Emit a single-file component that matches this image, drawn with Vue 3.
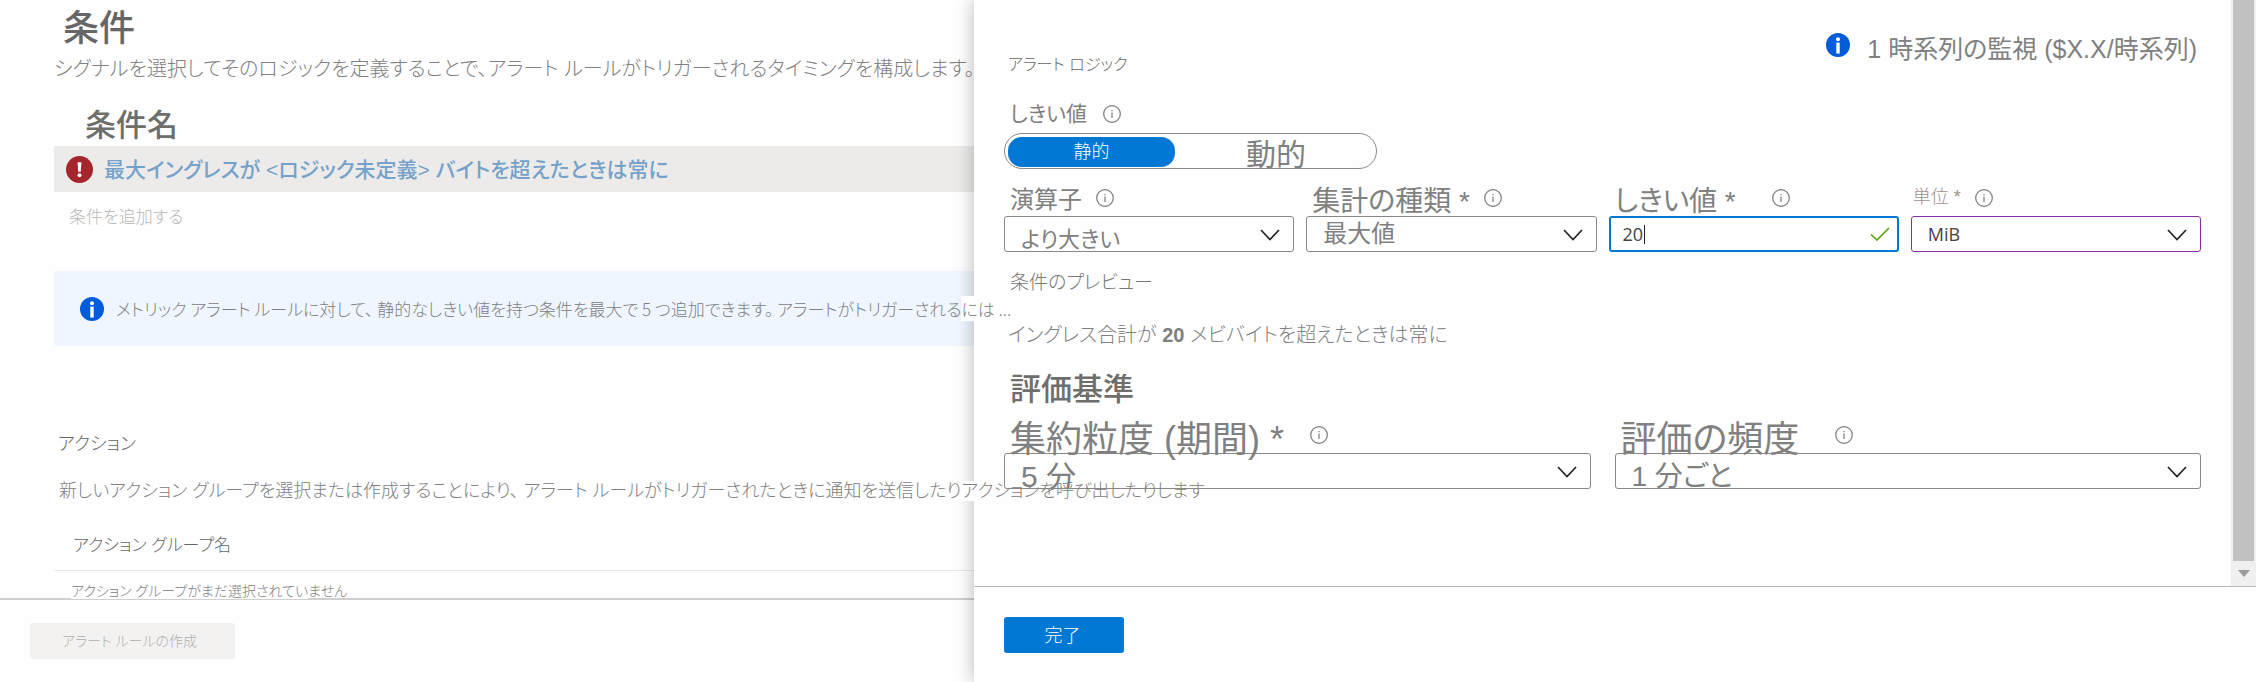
<script setup>
import { ref } from 'vue'

const threshold = ref('20')
const mode = ref('static')

const conditionFields = [
  { id: 'operator', label: '演算子', labelClass: 'size-24 gap-s', value: 'より大きい', valueClass: 'size-22 low' },
  { id: 'aggregation', label: '集計の種類', required: true, labelClass: 'size-28 gap-s', value: '最大値', valueClass: 'size-24' },
  { id: 'threshold', label: 'しきい値', required: true, labelClass: 'size-28 gap-l', input: true },
  { id: 'unit', label: '単位', required: true, labelClass: 'size-18 gap-s thin', value: 'MiB', valueClass: 'latin', changed: true },
]

const evaluationFields = [
  { id: 'period', label: '集約粒度 (期間)', required: true, labelClass: 'size-36 gap-m', value: '5 分', valueClass: 'size-30 low' },
  { id: 'frequency', label: '評価の頻度', labelClass: 'size-36 gap-l', value: '1 分ごと', valueClass: 'size-28 low' },
]
</script>

<template>
  <div class="page">
    <main class="rule">
      <div class="rule-body">
        <h1>条件</h1>
        <p class="lead">シグナルを選択してそのロジックを定義することで、アラート ルールがトリガーされるタイミングを構成します。</p>

        <h2>条件名</h2>
        <div class="condition">
          <svg class="error-icon" viewBox="0 0 27 27" aria-hidden="true">
            <circle cx="13.5" cy="13.5" r="13.5" fill="#a4262c" />
            <path d="M11.6 6.2h3.8l-.6 9.6h-2.6z" fill="#fff" />
            <circle cx="13.5" cy="19.3" r="2" fill="#fff" />
          </svg>
          <a href="#">最大イングレスが &lt;ロジック未定義&gt; バイトを超えたときは常に</a>
        </div>
        <button class="add" type="button" disabled>条件を追加する</button>

        <div class="banner">
          <svg class="info-filled" viewBox="0 0 24 24" aria-hidden="true">
            <circle cx="12" cy="12" r="12" fill="#015cda" />
            <circle cx="12" cy="6.2" r="2" fill="#fff" />
            <rect x="10.3" y="9.6" width="3.4" height="11" fill="#fff" />
          </svg>
          <p class="over">メトリック アラート ルールに対して、 静的なしきい値を持つ条件を最大で 5 つ追加できます。 アラートがトリガーされる<span class="mask">には ...</span></p>
        </div>

        <h3 class="actions-title">アクション</h3>
        <p class="over actions-text">新しいアクション グループを選択または作成することにより、 アラート ルールがトリガーされたときに通知を送信した<span class="mask">りア</span>クションを呼び出したりします</p>

        <table>
          <thead>
            <tr><th scope="col">アクション グループ名</th></tr>
          </thead>
          <tbody>
            <tr><td><span class="over"><span class="mask">アクション グループがまだ選択されてい</span>ません</span></td></tr>
          </tbody>
        </table>
      </div>
      <footer class="rule-footer">
        <button class="create" type="button" disabled>アラート ルールの作成</button>
      </footer>
    </main>

    <aside class="panel">
      <div class="panel-body">
        <form class="logic" @submit.prevent>
          <header class="panel-head">
            <h3>アラート ロジック</h3>
            <p class="notice">
              <svg class="info-filled" viewBox="0 0 24 24" aria-hidden="true">
                <circle cx="12" cy="12" r="12" fill="#015cda" />
                <circle cx="12" cy="6.2" r="2" fill="#fff" />
                <rect x="10.3" y="9.6" width="3.4" height="11" fill="#fff" />
              </svg>
              <span>1 時系列の監視 ($X.X/時系列)</span>
            </p>
          </header>

          <div class="mode-label">
            <span id="mode-label">しきい値</span>
            <svg class="info-line" viewBox="0 0 18 18" aria-hidden="true">
              <circle cx="9" cy="9" r="8.3" /><path d="M9 7.6v5.4M9 5v1.3" />
            </svg>
          </div>
          <div class="toggle" role="group" aria-labelledby="mode-label">
            <button type="button" class="static" :aria-pressed="mode === 'static'" @click="mode = 'static'">静的</button>
            <button type="button" class="dynamic" :aria-pressed="mode === 'dynamic'" @click="mode = 'dynamic'">動的</button>
          </div>

          <div class="fields four">
            <div v-for="f in conditionFields" :key="f.id" class="field">
              <div class="label" :class="f.labelClass">
                <label :for="f.id">{{ f.label }}<template v-if="f.required"> *</template></label>
                <svg class="info-line" viewBox="0 0 18 18" aria-hidden="true">
                  <circle cx="9" cy="9" r="8.3" /><path d="M9 7.6v5.4M9 5v1.3" />
                </svg>
              </div>
              <div v-if="f.input" class="box focused">
                <input :id="f.id" v-model="threshold" type="text" inputmode="numeric" />
                <span class="caret"></span>
                <svg class="check" viewBox="0 0 20 14" aria-hidden="true"><path d="M1 7.5l6 5.5L19 1" /></svg>
              </div>
              <div v-else class="box" :class="{ changed: f.changed }">
                <select :id="f.id" :class="f.valueClass"><option>{{ f.value }}</option></select>
                <svg class="chevron" viewBox="0 0 20 12" aria-hidden="true"><path d="M1 1l9 9.5L19 1" /></svg>
              </div>
            </div>
          </div>

          <h4>条件のプレビュー</h4>
          <p class="preview">イングレス合計が <strong>20</strong> メビバイトを超えたときは常に</p>

          <h2 class="criteria">評価基準</h2>
          <div class="fields two">
            <div v-for="f in evaluationFields" :key="f.id" class="field">
              <div class="label" :class="f.labelClass">
                <label :for="f.id">{{ f.label }}<template v-if="f.required"> *</template></label>
                <svg class="info-line" viewBox="0 0 18 18" aria-hidden="true">
                  <circle cx="9" cy="9" r="8.3" /><path d="M9 7.6v5.4M9 5v1.3" />
                </svg>
              </div>
              <div class="box">
                <select :id="f.id" :class="f.valueClass"><option>{{ f.value }}</option></select>
                <svg class="chevron" viewBox="0 0 20 12" aria-hidden="true"><path d="M1 1l9 9.5L19 1" /></svg>
              </div>
            </div>
          </div>
        </form>
        <div class="scrollbar" aria-hidden="true">
          <div class="thumb"></div>
          <svg viewBox="0 0 12 7"><path d="M0 0h12L6 7z" fill="#9b9b9b" /></svg>
        </div>
      </div>
      <footer class="panel-footer">
        <button class="done" type="button">完了</button>
      </footer>
    </aside>
  </div>
</template>

<style>
body {
  background: #fefefe;
}
</style>

<style scoped>
.page {
  display: grid;
  grid-template-columns: minmax(0, 974fr) minmax(0, 1282fr);
  height: 100vh;
  min-height: 682px;
  overflow: hidden;
  background: #fefefe;
  color: #808080;
  font-family: "Liberation Sans", "Noto Sans CJK JP", sans-serif;
  font-size: 18px;
  font-weight: 300;
  font-feature-settings: "palt";
  line-height: 24px;
}
.page * {
  box-sizing: border-box;
}
h1, h2, h3, h4, p {
  margin: 0;
  font-weight: 300;
}
button, select, input {
  margin: 0;
  font: inherit;
  font-feature-settings: inherit;
  color: inherit;
}
button {
  padding: 0;
  border: 0;
  background: none;
}
svg {
  display: block;
  flex: none;
}

.rule {
  display: flex;
  flex-direction: column;
  min-height: 0;
}
.rule-body {
  flex: 1;
  min-height: 0;
  padding: 7px 0 0 54px;
  white-space: nowrap;
}
h1 {
  padding-left: 9px;
  color: #666;
  font-size: 36px;
  font-weight: 500;
  line-height: 44px;
}
.lead {
  margin-top: 6px;
  font-size: 20px;
}
h2 {
  margin: 27px 0 2px 31px;
  color: #6e6e6b;
  font-size: 31px;
  font-weight: 500;
  line-height: 36px;
}
.condition {
  display: flex;
  align-items: center;
  gap: 11px;
  height: 46px;
  padding-left: 12px;
  background: #ecebe9;
}
.error-icon {
  width: 27px;
  height: 27px;
}
.condition a {
  padding-top: 2px;
  color: #75a2cb;
  font-size: 21px;
  font-weight: 500;
  text-decoration: none;
}
.add {
  display: block;
  margin: 14px 0 0 15px;
  color: #b8b8b8;
  font-size: 17px;
  line-height: 24px;
}
.banner {
  display: flex;
  align-items: center;
  gap: 12px;
  height: 75px;
  margin-top: 41px;
  padding-left: 26px;
  border-radius: 3px 0 0 3px;
  background: #eff6ff;
  font-family: "Noto Sans CJK JP", sans-serif;
  font-size: 17px;
}
.info-filled {
  width: 24px;
  height: 24px;
}
.over {
  position: relative;
  z-index: 2;
}
.mask {
  background: #fefefe;
}
.actions-title {
  margin-top: 86px;
  padding-left: 4px;
  color: #666;
  font-size: 18px;
}
.actions-text {
  margin-top: 23px;
  padding-left: 5px;
}
table {
  width: 100%;
  margin-top: 17px;
  border-collapse: collapse;
}
th {
  height: 50px;
  padding: 2px 0 0 19px;
  border-bottom: 1px solid #e8e8e8;
  color: #666;
  font-size: 17px;
  font-weight: 300;
  text-align: left;
}
td {
  padding: 10px 0 0 17px;
  font-size: 14px;
  line-height: 20px;
}
.rule-footer {
  height: 84px;
  padding: 23px 0 0 30px;
  border-top: 2px solid #cfcfcf;
}
.create {
  width: 205px;
  height: 36px;
  padding-right: 6px;
  border-radius: 3px;
  background: #f3f2f1;
  color: #b0aeac;
  font-size: 14px;
}

.panel {
  position: relative;
  z-index: 1;
  display: flex;
  flex-direction: column;
  min-height: 0;
  background: #fefefe;
  box-shadow: 0 0 18px rgba(0, 0, 0, 0.28);
}
.panel-body {
  display: flex;
  flex: 1;
  min-height: 0;
}
.logic {
  flex: 1;
  min-width: 0;
  padding: 31px 30px 0 30px;
}
.panel-head {
  display: flex;
  justify-content: space-between;
  height: 46px;
}
.panel-head h3 {
  margin-top: 22px;
  padding-left: 4px;
  color: #666;
  font-size: 16px;
}
.notice {
  display: flex;
  gap: 17px;
  padding: 2px 4px 0 0;
  font-size: 25px;
  font-weight: 400;
  line-height: 32px;
}
.mode-label {
  display: flex;
  align-items: center;
  gap: 16px;
  height: 26px;
  margin-top: 24px;
  padding-left: 6px;
  font-size: 21px;
  font-weight: 400;
}
.info-line {
  width: 18px;
  height: 18px;
  fill: none;
  stroke: #7a7a7a;
  stroke-width: 1.2;
}
.toggle {
  display: grid;
  grid-template-columns: 167px 1fr;
  width: 373px;
  height: 36px;
  margin-top: 6px;
  padding: 3px;
  border: 1px solid #8a8886;
  border-radius: 18px;
}
.static {
  border-radius: 14px;
  background: #0078d4;
  color: #fff;
  line-height: 26px;
}
.dynamic {
  padding-top: 6px;
  padding-left: 4px;
  font-size: 30px;
  font-weight: 400;
}
.fields {
  display: grid;
}
.four {
  grid-template-columns: repeat(4, minmax(0, 1fr));
  column-gap: 12px;
  margin-top: 17px;
}
.two {
  grid-template-columns: repeat(2, minmax(0, 1fr));
  column-gap: 24px;
  margin-top: 12px;
}
.label {
  position: relative;
  z-index: 1;
  display: flex;
  align-items: flex-start;
  height: 30px;
  padding-left: 6px;
  font-weight: 400;
  line-height: 1;
  white-space: nowrap;
}
.two .label {
  height: 33px;
}
.label label {
  padding-top: 2px;
}
.label .info-line {
  margin-top: 3px;
}
.two .info-line {
  margin-top: 6px;
}
.thin {
  padding-left: 2px;
  color: #9c9090;
  font-weight: 300;
}
.gap-s { gap: 14px; }
.gap-m { gap: 26px; }
.gap-l { gap: 36px; }
.size-18 { font-size: 18px; }
.size-22 { font-size: 22px; }
.size-24 { font-size: 24px; }
.size-28 { font-size: 28px; }
.size-36 { font-size: 36px; }
.box {
  position: relative;
  display: flex;
  align-items: center;
  height: 36px;
  border: 1px solid #8a8886;
  border-radius: 3px;
}
.changed {
  border-color: #8a2da5;
}
.focused {
  padding: 0 7px 0 12px;
  border: 2px solid #0078d4;
}
select {
  width: 100%;
  height: 34px;
  padding: 0 40px 0 16px;
  border: 0;
  outline: 0;
  background: transparent;
  appearance: none;
  font-weight: 400;
  line-height: 34px;
}
select.size-22 { font-size: 22px; }
select.size-24 { font-size: 24px; }
select.size-28 { font-size: 28px; }
select.size-30 { font-size: 30px; }
select.low {
  padding-top: 6px;
}
select.latin, input {
  color: #444;
  font-family: "Open Sans", "Noto Sans CJK JP", sans-serif;
  font-size: 18px;
  font-weight: 400;
}
input {
  width: 21px;
  padding: 0;
  border: 0;
  outline: 0;
  background: transparent;
}
.caret {
  width: 1px;
  height: 19px;
  background: #222;
}
.check {
  width: 20px;
  height: 14px;
  margin-left: auto;
  fill: none;
  stroke: #57a300;
  stroke-width: 1.6;
}
.chevron {
  position: absolute;
  top: 12px;
  right: 13px;
  width: 20px;
  height: 12px;
  fill: none;
  stroke: #222;
  stroke-width: 1.7;
  pointer-events: none;
}
h4 {
  margin-top: 19px;
  padding-left: 6px;
  color: #777;
  font-size: 19px;
}
.preview {
  margin-top: 28px;
  padding-left: 4px;
  font-size: 20px;
}
.preview strong {
  font-weight: 700;
}
.criteria {
  margin: 25px 0 0 6px;
}
.scrollbar {
  display: flex;
  flex: none;
  flex-direction: column;
  align-items: center;
  width: 25px;
  padding: 0 2px;
  background: #f0f0f0;
}
.thumb {
  flex: 1;
  width: 100%;
  background: #c1c1c1;
}
.scrollbar svg {
  width: 12px;
  height: 7px;
  margin: 9px 0;
}
.panel-footer {
  height: 96px;
  padding: 30px;
  border-top: 1px solid #b9b9b9;
}
.done {
  width: 120px;
  height: 36px;
  padding: 2px 3px 0 0;
  border-radius: 3px;
  background: #0078d4;
  color: #fff;
}
</style>
